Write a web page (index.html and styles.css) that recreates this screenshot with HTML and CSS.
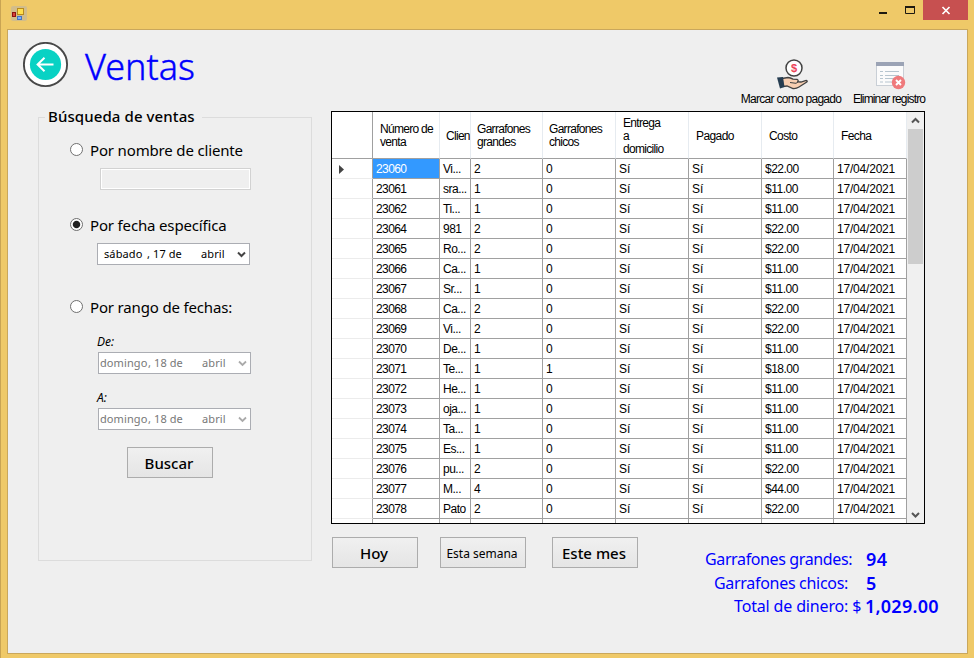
FILE: index.html
```
<!DOCTYPE html>
<html lang="es">
<head>
<meta charset="utf-8">
<title>Ventas</title>
<link rel="stylesheet" href="styles.css">
</head>
<body>
<div class="window">
  <header class="titlebar">
    <svg class="app-icon" width="16" height="16" viewBox="0 0 16 16">
      <rect width="16" height="15" rx="2" fill="#d2bd8a"/>
      <rect x="1.500" y="6.500" width="3" height="4" fill="#d8403a" stroke="#8c1512"/>
      <rect x="6.500" y="2.500" width="6" height="6" fill="#ffdf4c" stroke="#b88a1c"/>
      <rect x="6.500" y="10.500" width="4" height="3" fill="#7eb2f5" stroke="#4474c4"/>
    </svg>
    <div class="controls">
      <span class="ctl"><svg width="27" height="20"><rect x="10" y="12" width="8" height="2" fill="#1e1a10"/></svg></span>
      <span class="ctl"><svg width="27" height="20"><path d="M9.500 7v6.500h9V7M9 7.500h10" fill="none" stroke="#1e1a10"/><path d="M9 7h10" stroke="#1e1a10" stroke-width="2"/></svg></span>
      <span class="ctl close"><svg width="45" height="20"><path d="M19.500 7l7 7M26.500 7l-7 7" stroke="#fff" stroke-width="1.700"/></svg></span>
    </div>
  </header>
  <main class="client">
    <div class="top">
      <svg class="back" width="46" height="46" viewBox="0 0 46 46">
        <circle cx="22.500" cy="22.500" r="21.600" fill="#fff" stroke="#484848" stroke-width="1.900"/>
        <circle cx="22.500" cy="22.500" r="15.600" fill="#08d2c4"/>
        <path d="M30.500 22.500H15M21.500 15.800L14.600 22.500l6.900 6.700" fill="none" stroke="#fff" stroke-width="2"/>
      </svg>
      <h1>Ventas</h1>
      <div class="tools">
        <div class="tool pay">
          <svg width="34" height="34" viewBox="0 0 34 34">
            <circle cx="20" cy="10" r="8" fill="#fff" stroke="#424242" stroke-width="1.500"/>
            <text x="20" y="13.500" text-anchor="middle" class="coin">$</text>
            <path d="M8 20.500L14 19.500c2 0 4 1 5 1.600l4 .2c1.500.5 1.500 2 .3 2.500L27 24l4.500-1.400c1.500-.4 2.200.6 1.300 1.500L25 29c-2 1.300-4 1.700-6 1.500L13 28l-4 .5z" fill="#f8cfb2" stroke="#424242" stroke-width="1.300"/>
            <path d="M3 19.500l6-.5 1.500 10-4.500 1.500z" fill="#263d51"/>
            <path d="M16 24.500l6 .8 2-1.300" fill="none" stroke="#424242"/>
          </svg>
          <span>Marcar como pagado</span>
        </div>
        <div class="tool del">
          <svg width="34" height="34" viewBox="0 0 34 34">
            <rect x="4.500" y="4.500" width="27" height="23" fill="#fbfbfb" stroke="#c9cfd6"/>
            <path d="M4 4h28v4H4z" fill="#9ba3b5"/>
            <path d="M8 13.500h3M8 17.500h3M8 20.500h3M8 24h3M13 13.500h14M13 17.500h14M13 20.500h10M13 24h7" stroke="#b7c5cf"/>
            <circle cx="26.500" cy="24.500" r="6.700" fill="#ef7a7c"/>
            <path d="M24 22l5 5M29 22l-5 5" stroke="#fff" stroke-width="1.900"/>
          </svg>
          <span>Eliminar registro</span>
        </div>
      </div>
    </div>
    <div class="body">
      <fieldset class="search">
        <legend>Búsqueda de ventas</legend>
        <label class="opt"><i class="radio"></i><span>Por nombre de cliente</span></label>
        <div class="textbox"></div>
        <label class="opt second"><i class="radio on"></i><span>Por fecha específica</span></label>
        <div class="date active"><span class="d1">sábado</span><span class="d2">, 17 de</span><span class="d3">abril</span><svg width="9" height="7"><path d="M1 1.500l3.500 3.500L8 1.500" fill="none" stroke="#444" stroke-width="2"/></svg></div>
        <label class="opt third"><i class="radio"></i><span>Por rango de fechas:</span></label>
        <div class="sub">De:</div>
        <div class="date"><span class="d1">domingo</span><span class="d2">, 18 de</span><span class="d3">abril</span><svg width="9" height="7"><path d="M1 1.500l3.500 3.500L8 1.500" fill="none" stroke="#aaa" stroke-width="1.800"/></svg></div>
        <div class="sub to">A:</div>
        <div class="date"><span class="d1">domingo</span><span class="d2">, 18 de</span><span class="d3">abril</span><svg width="9" height="7"><path d="M1 1.500l3.500 3.500L8 1.500" fill="none" stroke="#aaa" stroke-width="1.800"/></svg></div>
        <div class="btn find">Buscar</div>
      </fieldset>
      <section class="results">
        <div class="gridbox">
          <div class="grid" id="grid">
            <div class="row head"><div></div><div>Número de<br>venta</div><div class="clip">Clien</div><div>Garrafones<br>grandes</div><div>Garrafones<br>chicos</div><div>Entrega<br>a<br>domicilio</div><div>Pagado</div><div>Costo</div><div>Fecha</div></div>
          </div>
          <div class="scroll">
            <svg width="17" height="17"><path d="M5 10.500L8.500 7l3.500 3.500" fill="none" stroke="#555" stroke-width="2"/></svg>
            <div class="thumb"></div>
            <svg class="down" width="17" height="17"><path d="M5 7l3.500 3.500L12 7" fill="none" stroke="#555" stroke-width="2"/></svg>
          </div>
        </div>
        <div class="under">
          <div class="btn today">Hoy</div>
          <div class="btn week">Esta semana</div>
          <div class="btn month">Este mes</div>
          <div class="totals">
            <div class="t1"><span>Garrafones grandes:</span><b>94</b></div>
            <div class="t2"><span>Garrafones chicos:</span><b>5</b></div>
            <div class="t3"><span>Total de dinero: $</span><b>1,029.00</b></div>
          </div>
        </div>
      </section>
    </div>
  </main>
</div>
<script src="rows.js"></script>
</body>
</html>
```
FILE: styles.css
```
* { box-sizing: border-box; }
body { margin: 0; font-family: "Noto Sans", sans-serif; color: #000; }
.window { width: 974px; height: 658px; background: #efc968; border-left: 1px solid #c9a453; overflow: hidden; white-space: nowrap; }
.titlebar { height: 29px; display: flex; justify-content: space-between; }
.app-icon { margin: 6px 0 0 10px; }
.controls { display: flex; height: 20px; margin-right: 6px; }
.ctl { display: block; height: 20px; }
.ctl svg { display: block; }
.close { background: #c75050; }
.client { width: 961px; height: 625px; margin-left: 6px; background: #efefef; border: 1px solid #c9a75c; }
.top { height: 81px; display: flex; padding-left: 15px; }
.back { margin-top: 12px; }
h1 { margin: 8px 0 0 16px; font-size: 36px; line-height: 58px; font-weight: 350; color: #00f; letter-spacing: 0; width: 115px; -webkit-text-stroke: 0.4px #00f; }
.tools { display: flex; flex: 1; justify-content: flex-end; padding: 28px 42px 0 0; gap: 12px; }
.tool { display: flex; flex-direction: column; align-items: center; font: 12px/15px "Liberation Sans", sans-serif; }
.tool.pay { width: 100px; letter-spacing: -0.72px; }
.tool.del { width: 72px; letter-spacing: -0.85px; }
.coin { font: bold 11px "Liberation Sans", sans-serif; letter-spacing: 0; fill: #ec4458; }
.body { display: flex; }
.search { margin: -5px 0 0 30px; padding: 0; width: 274px; height: 455px; border: 1px solid #dcdcdc; min-width: 0; }
legend { margin-left: 6px; padding: 0 7px 0 3px; font-size: 15px; line-height: 20px; height: 22px; font-weight: 500; width: 157px; letter-spacing: 0.1px; }
.opt { display: flex; height: 22px; align-items: center; margin: 10px 0 0 31px; font-size: 15px; letter-spacing: -0.16px; }
.opt span { line-height: 22px; margin-left: 7px; padding-top: 2px; }
.radio { width: 13px; height: 13px; border: 1px solid #707070; border-radius: 50%; background: #fff; display: block; }
.radio.on { background: radial-gradient(circle, #222 0 3.2px, #fff 4.2px); }
.textbox { width: 151px; height: 22px; margin: 8px 0 0 61px; border: 1px solid #d2d2d2; box-shadow: inset 0 0 0 1px #fff; }
.opt.second { margin-top: 23px; }
.opt.third { margin-top: 30px; }
.date { display: flex; align-items: center; width: 153px; height: 22px; margin-left: 59px; border: 1px solid #abadb3; background: #fff; color: #777; font-size: 11px; line-height: 20px; padding-left: 1px; letter-spacing: 0.1px; }
.date .d1 { width: 48px; }
.date .d2 { width: 54px; }
.date .d3 { width: 36px; }
.date.active { margin: 8px 0 0 58px; color: #000; padding-left: 6px; }
.date.active .d1 { width: 43px; }
.date.active .d2 { width: 54px; }
.sub { margin: 17px 0 0 58px; height: 18px; font-size: 12px; line-height: 16px; font-style: italic; }
.sub.to { margin-top: 16px; }
.btn { display: flex; align-items: center; justify-content: center; width: 86px; height: 31px; border: 1px solid #acacac; background: linear-gradient(#f0f0f0, #e5e5e5); font-size: 15px; font-weight: 500; padding-right: 2px; }
.find { margin: 17px 0 0 88px; }
.results { margin-left: 19px; }
.gridbox { display: flex; width: 594px; height: 413px; border: 1px solid #000; overflow: hidden; background: #fff; }
.grid { width: 575px; font: 12px/21px "Liberation Sans", sans-serif; letter-spacing: -0.6px; }
.row { display: grid; grid-template-columns: 41px 67px 31px 72px 73px 73px 73px 72px 73px; height: 20px; }
.row > div { border-right: 1px solid #a0a0a0; border-bottom: 1px solid #a0a0a0; padding-left: 3px; overflow: hidden; }
.row > div:nth-child(9) { letter-spacing: -0.2px; }
.row > div:nth-child(3) { letter-spacing: -0.5px; }
.row > div:nth-child(6), .row > div:nth-child(7) { letter-spacing: 0; }
.row > div:first-child { border-bottom-color: #ececec; padding-left: 6px; }
.row > div.sel { background: #3399ff; color: #fff; }
.row > div:nth-child(8) { letter-spacing: -0.5px; }
.head { height: 47px; line-height: 13px; }
.row.head > div { display: flex; align-items: center; padding: 2px 0 0 7px; border-right-color: #e6ebf0; letter-spacing: -0.7px; }
.row.head > div:nth-child(n+4) { padding-left: 6px; }
.row.head > div:nth-child(6) { padding-left: 7px; }
.row.head > div:nth-child(n+7) { padding-left: 7px; letter-spacing: -0.6px; }
.row.head > div:first-child { border-right-color: #a0a0a0; border-bottom-color: #a0a0a0; }
.row.head > .clip { padding-left: 6px; }
.mark { display: block; margin-top: 5px; }
.scroll { width: 17px; background: #f0f0f0; display: flex; flex-direction: column; }
.scroll svg { display: block; }
.thumb { height: 135px; background: #cdcdcd; margin: 0 1px; }
.down { margin-top: auto; }
.under { display: flex; margin-top: 13px; margin-left: 1px; }
.week { margin-left: 22px; font-size: 12px; font-weight: 400; padding-top: 2px; }
.month { margin-left: 26px; }
.totals { color: #00f; font-size: 16px; line-height: 24px; margin: 10px 0 0 67px; }
.totals div { display: flex; height: 24px; }
.totals div span { letter-spacing: -0.37px; }
.totals b { font-weight: 600; font-size: 18px; }
.totals .t1 span { width: 147px; }
.totals .t2 span { width: 138px; letter-spacing: -0.3px; }
.t1 b { margin-left: 14px; letter-spacing: 0.4px; }
.t2 { padding-left: 9px; }
.t2 b { margin-left: 14px; }
.totals .t3 { padding-left: 29px; margin-top: -1px; }
.totals .t3 span { width: 128px; letter-spacing: -0.15px; }
.t3 b { margin-left: 3px; letter-spacing: 0.25px; }
```
FILE: rows.js
```
const names = ["Vi...", "sra...", "Ti...", "981", "Ro...", "Ca...", "Sr...", "Ca...", "Vi...", "De...", "Te...", "He...", "oja...", "Ta...", "Es...", "pu...", "M...", "Pato"];
const ids = [23060, 23061, 23062, 23064, 23065, 23066, 23067, 23068, 23069, 23070, 23071, 23072, 23073, 23074, 23075, 23076, 23077, 23078];
const large = [2, 1, 1, 2, 2, 1, 1, 2, 2, 1, 1, 1, 1, 1, 1, 2, 4, 2];
const marker = '<svg class="mark" width="7" height="11"><path d="M1 1v9l5-4.500z" fill="#444"/></svg>';
const grid = document.getElementById("grid");
ids.forEach((id, i) => {
  const small = id === 23071 ? 1 : 0;
  const cost = large[i] * 11 + small * 7;
  const cells = [i ? "" : marker, id, names[i], large[i], small, "Sí", "Sí", "$" + cost + ".00", "17/04/2021"];
  grid.insertAdjacentHTML("beforeend", '<div class="row">' + cells.map((c, k) => `<div${!i && k === 1 ? ' class="sel"' : ""}>${c}</div>`).join("") + "</div>");
});
grid.insertAdjacentHTML("beforeend", '<div class="row">' + "<div></div>".repeat(9) + "</div>");
```
